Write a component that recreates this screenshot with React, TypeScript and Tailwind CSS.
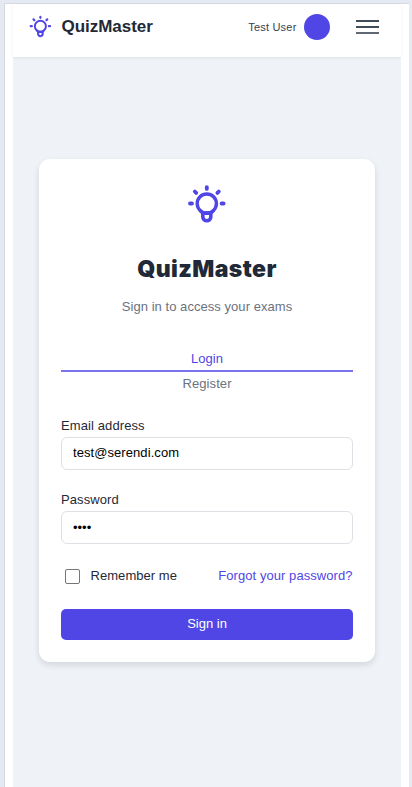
function BulbIcon({ size }: { size: number }) {
  return (
    <svg width={size} height={size} viewBox="0 0 40 40" fill="none" stroke="#4f46e5" strokeLinejoin="round" className="block shrink-0">
      <circle cx="19.8" cy="19.6" r="9.6" strokeWidth="3.4" />
      <path strokeWidth="3.4" d="M12.8 26.2L16 29.4H23.6L26.8 26.2" />
      <path strokeWidth="3.6" d="M15.8 29H23.8V32.8a4 4 0 0 1-8 0Z" />
      <path strokeWidth="3.8" strokeLinecap="round" d="M19.8 3.1v1.8M3 19.5h2M34.6 19.5h2M7.8 7.5l1.4 1.4M31.8 7.5l-1.4 1.4" />
    </svg>
  );
}

export default function App() {
  return (
    <div className="h-[787px] w-[412px] overflow-hidden bg-[#e5eaf2] pt-[3px] pr-[3px] pl-1 font-['Liberation_Sans',Arial,sans-serif] text-[13px] leading-4 text-[#1f2937]">
      <div className="h-[784px] border-t border-l border-[#d5d9e2] bg-white pr-2 pl-2">
        <div className="flex h-full flex-col bg-[#eff3f8]">
          <header className="flex h-[53px] shrink-0 items-start bg-white pl-[16px] shadow-[0_1px_3px_rgba(0,0,0,0.07)]">
            <div className="mt-[11px]">
              <BulbIcon size={23} />
            </div>
            <span className="mt-[12px] ml-[9.5px] text-[17px] leading-[22px] font-bold tracking-[-0.03px]">QuizMaster</span>
            <span className="mt-[15px] ml-auto text-[11px] leading-4 tracking-[0.2px] text-[#374151]">Test User</span>
            <div className="mt-[10px] ml-[7px] size-[26px] rounded-full bg-[#4f46e5]" />
            <button aria-label="Menu" className="mt-[16px] mr-[22.5px] ml-[26px] flex w-[23px] flex-col gap-[4px]">
              <i className="h-[2px] w-full bg-[#414b5a]" />
              <i className="h-[2px] w-full bg-[#414b5a]" />
              <i className="h-[2px] w-full bg-[#606875]" />
            </button>
          </header>
          <main className="mx-[26px] mt-[102px] flex h-[503px] flex-col rounded-[11px] bg-white px-[22px] shadow-[0_3px_6px_rgba(0,0,0,0.12)]">
            <div className="mt-[25px] flex justify-center">
              <BulbIcon size={40} />
            </div>
            <h1 className="mt-[31px] text-center font-['Inter'] text-[23px] leading-[28px] font-black tracking-[0.4px]">QuizMaster</h1>
            <p className="mt-[16px] text-center tracking-[0.05px] text-[#6b7280]">Sign in to access your exams</p>
            <div className="mt-[36px] h-[21px] border-b-2 border-[#7b74ec] text-center text-[#4f46e5]">Login</div>
            <div className="mt-[4px] text-center tracking-[0.1px] text-[#6b7280]">Register</div>
            <label className="mt-[26px] block tracking-[0.1px]">Email address</label>
            <input className="mt-[3px] h-[33px] w-full rounded-[6px] border border-[#dde0e5] px-[11px] pb-[2px] tracking-[0.07px] text-black" defaultValue="test@serendi.com" />
            <label className="mt-[22px] block tracking-[0.1px]">Password</label>
            <input type="password" className="mt-[3px] h-[33px] w-full rounded-[6px] border border-[#dde0e5] px-[11px] text-black" defaultValue="test" />
            <div className="mt-[24px] flex items-center">
              <span role="checkbox" aria-checked="false" className="ml-1 size-[15px] rounded-[2px] border border-[#767676]" />
              <span className="ml-[10.5px] tracking-[0.05px]">Remember me</span>
              <a className="mr-[0.5px] ml-auto tracking-[0.06px] text-[#4f46e5]">Forgot your password?</a>
            </div>
            <button className="mt-[25px] h-[31px] rounded-[5px] bg-[#4f46e5] pb-[2px] text-white">Sign in</button>
          </main>
        </div>
      </div>
    </div>
  );
}
